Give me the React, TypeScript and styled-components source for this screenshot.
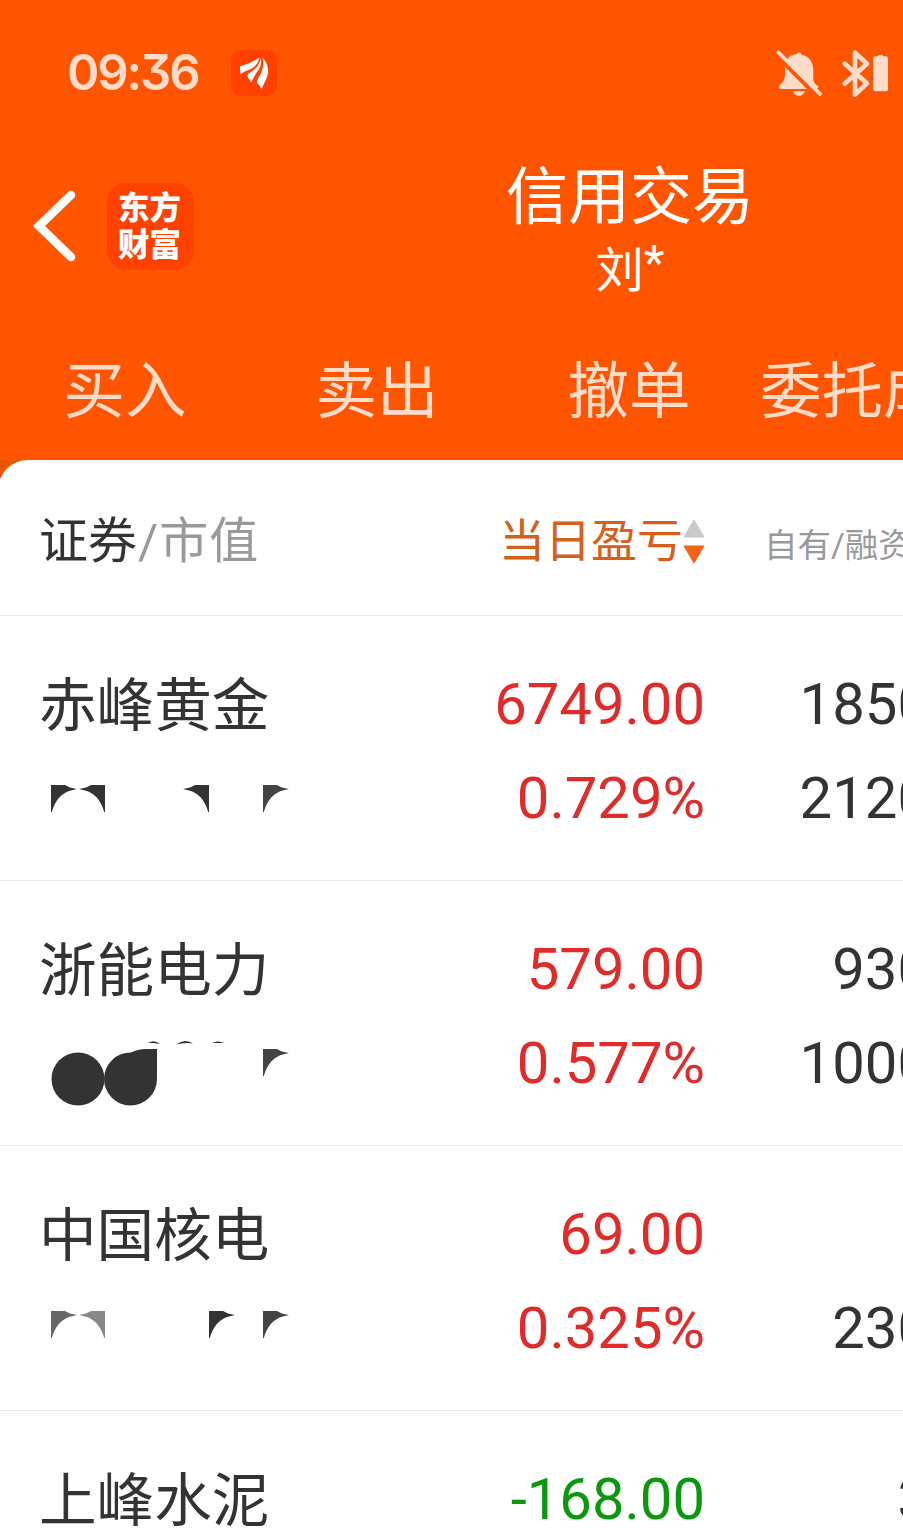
import React from 'react';
import styled, { createGlobalStyle } from 'styled-components';

const GlobalStyle = createGlobalStyle`
  * { box-sizing: border-box; }
  body {
    margin: 0;
    overflow: hidden;
    background: #fff;
    font-family: Roboto, 'Noto Sans CJK SC', sans-serif;
  }
`;

const Screen = styled.div`
  width: 903px;
  height: 1533px;
  overflow: hidden;
  background: #fff;
  color: #333;
`;

const Header = styled.header`
  height: 460px;
  background: #ff5500;
  color: #fff;
`;

const StatusBar = styled.div`
  display: flex;
  align-items: center;
  height: 146px;
  padding: 0 13px 0 67px;
`;

const Clock = styled.span`
  width: 164px;
  font: 600 49px/60px Inter, sans-serif;
  font-feature-settings: 'cv09';
  letter-spacing: -2.1px;
  color: #ffdcc9;
`;

const StatusIcons = styled.svg`
  margin-left: auto;
`;

const TitleBar = styled.div`
  display: grid;
  grid-template-columns: 107px 87px 1fr;
  height: 171px;
`;

const BackIcon = styled.svg`
  margin: 44px 0 0 30px;
`;

const BrandBadge = styled.div`
  display: flex;
  flex-direction: column;
  width: 87px;
  height: 87px;
  margin-top: 37px;
  padding: 4px 2px 0 0;
  border-radius: 19px;
  background: #ff4200;
  text-align: center;
  font: 900 31.5px/37px 'Noto Sans CJK SC', sans-serif;
`;

const TitleBlock = styled.div`
  width: 872px;
  text-align: center;
`;

const Title = styled.h1`
  margin: 10px 0 0;
  font: 400 62px/72px 'Noto Sans CJK SC', sans-serif;
`;

const Account = styled.div`
  height: 80px;
  padding-top: 6px;
  font: 400 48px/74px Roboto, 'Noto Sans CJK SC', sans-serif;
`;

const Mask = styled.span`
  display: inline-block;
  line-height: 40px;
  vertical-align: 8px;
`;

const Tabs = styled.nav`
  display: grid;
  grid-template-columns: repeat(4, 252px);
  margin-left: -1px;
  height: 140px;
`;

const Tab = styled.span`
  text-align: center;
  white-space: nowrap;
  color: #ffdcc9;
  font: 400 61.5px/140px 'Noto Sans CJK SC', sans-serif;

  &:last-child {
    padding-left: 4px;
  }
`;

const PanelBackdrop = styled.div`
  background: linear-gradient(#ec5500 0 40px, #fff 40px);
`;

const Panel = styled.main`
  margin-left: -2px;
  padding-left: 2px;
  border-radius: 30px 0 0 0;
  background: #fff;
`;

const Row = styled.div`
  display: grid;
  grid-template-columns: 450px 216px 225px;
  width: 930px;
  padding-left: 39px;
  border-bottom: 1px solid #ebebeb;
`;

const HeadRow = styled(Row)`
  height: 156px;
  padding-top: 4px;
  line-height: 156px;
  white-space: nowrap;
`;

const SecurityHead = styled.span`
  font-size: 49px;
`;

const Muted = styled.span`
  color: #999;
  letter-spacing: 1px;
  padding-left: 1px;
`;

const ProfitHead = styled.span`
  display: flex;
  justify-content: flex-end;
  align-items: center;
  height: 153px;
  color: #d5601c;
  font-size: 46px;
`;

const OwnHead = styled.span`
  padding: 4px 0 0 59px;
  color: #999;
  font-size: 33.5px;
`;

const StockRow = styled(Row)`
  height: 265px;
  padding-top: 41px;
`;

const NameCell = styled.div`
  margin-top: -3px;
  font: 400 57.6px/94px 'Noto Sans CJK SC', sans-serif;
`;

const Residue = styled.svg`
  display: block;
  margin-top: 3px;
`;

const NumberCell = styled.div<{ $color?: string }>`
  text-align: right;
  font-size: 58px;
  line-height: 94px;
  color: ${p => p.$color ?? '#333'};
`;

const Line = styled.div`
  height: 94px;
`;

const leftCorner = (x: number, y: number, fill = '#333') => (
  <path d={`M${x} ${y}h14l5 2.500 7 1.500-6 1.500Q${x + 6} ${y + 9} ${x + 0.8} ${y + 27}h-.8z`} fill={fill} />
);
const rightCorner = (x: number, y: number, fill = '#333') => (
  <path d={`M${x} ${y}h-14l-5 2.500-7 1.500 6 1.500Q${x - 6} ${y + 9} ${x - 0.8} ${y + 27}h.8z`} fill={fill} />
);

interface Stock {
  name: string;
  profit: string;
  rate: string;
  own: string;
  total: string;
  color: string;
  residue?: React.ReactNode;
}

const RED = '#e02b2b';
const GREEN = '#0b980f';

const stocks: Stock[] = [
  {
    name: '赤峰黄金', profit: '6749.00', rate: '0.729%', own: '1850', total: '2120', color: RED,
    residue: <>{leftCorner(12, 34)}{rightCorner(66, 34)}{rightCorner(170, 34)}{leftCorner(224, 34, '#444')}</>,
  },
  {
    name: '浙能电力', profit: '579.00', rate: '0.577%', own: '930', total: '1000', color: RED,
    residue: (
      <>
        <circle cx="39" cy="63" r="26.5" fill="#333" />
        <path d="M118 33v30a26.5 26.5 0 1 1-26-26.5q7-3.500 15-3.500z" fill="#333" />
        <path d="M109 27q6-4 12 1-6-1.500-12-1zM137 28.500q9-6.500 17-1-8-1.500-17 1zM173 27q6-3 12 0z" fill="#333" />
        {leftCorner(224, 33, '#444')}
      </>
    ),
  },
  {
    name: '中国核电', profit: '69.00', rate: '0.325%', own: '', total: '230', color: RED,
    residue: <>{leftCorner(12, 30, '#666')}{rightCorner(66, 30, '#888')}{leftCorner(170, 30)}{leftCorner(224, 30, '#444')}</>,
  },
  { name: '上峰水泥', profit: '-168.00', rate: '', own: '3', total: '', color: GREEN },
];

export default function App() {
  return (
    <Screen>
      <GlobalStyle />
      <Header>
        <StatusBar>
          <Clock>09:36</Clock>
          <svg width="46" height="46" viewBox="693 60 138 138">
            <rect x="693" y="60" width="138" height="138" rx="30" fill="#ff4000" />
            <g fill="#fff">
              <path d="M720 109q8-3 23-8 20-8 35-18-4 20-20 31-10 6-22 10-9 4-14 9-3-12-2-24z" />
              <path d="M781 83q6 17-4 34-7 10-13 20-4 8-11 21-4-11-9-15-2-7 1-14 30-18 36-46z" />
              <path d="M788 83q15 15 16 36 2 16-7 32-7 14-12 25-6-11-14-16-1-8 3-14 21-32 14-63z" />
            </g>
            <path d="M780 82q1 18-14 31-9 9-22 17M785 82q7 25-9 46-8 11-14 24" fill="none" stroke="#ff4000" strokeWidth="3.500" />
          </svg>
          <StatusIcons width="115" height="49" viewBox="75 54 345 147" fill="#ffdcc9">
            <path d="M116 78q10-7 25-9v-3q6-5 12 0v4q35 8 37 43v34q3 13 16 20l-6 8L112 90zM105 108l66 66H89q-5-5 0-11 15-12 16-30zM129 181h35q-3 13-17 14-14-1-18-14z" />
            <path d="M85 64l125 125" stroke="#ffdcc9" strokeWidth="11" strokeLinecap="round" />
            <path d="M284 98l67 59-36 34V65l36 33-67 60" fill="none" stroke="#ffdcc9" strokeWidth="14" strokeLinecap="round" strokeLinejoin="round" />
            <path d="M376 76h8v-4h15v4h8q7 0 7 7v91q0 7-7 7h-31q-7 0-7-7V83q0-7 7-7z" />
          </StatusIcons>
        </StatusBar>
        <TitleBar>
          <BackIcon width="46" height="72" viewBox="0 0 46 72">
            <path d="M41 5L9 36l32 31" fill="none" stroke="#fff" strokeWidth="8.500" strokeLinecap="round" />
          </BackIcon>
          <BrandBadge><span>东方</span><span>财富</span></BrandBadge>
          <TitleBlock>
            <Title>信用交易</Title>
            <Account>刘<Mask>*</Mask></Account>
          </TitleBlock>
        </TitleBar>
        <Tabs>
          {['买入', '卖出', '撤单', '委托成交'].map(t => <Tab key={t}>{t}</Tab>)}
        </Tabs>
      </Header>
      <PanelBackdrop>
        <Panel>
          <HeadRow>
            <SecurityHead>证券<Muted>/市值</Muted></SecurityHead>
            <ProfitHead>
              当日盈亏
              <svg width="22" height="46" viewBox="0 0 22 46">
                <path d="M11 2L21 19H1z" fill="#c9c9c9" stroke="#c9c9c9" strokeLinejoin="round" />
                <path d="M11 45L21 28H1z" fill="#f46216" stroke="#f46216" strokeLinejoin="round" />
              </svg>
            </ProfitHead>
            <OwnHead>自有/融资</OwnHead>
          </HeadRow>
          {stocks.map(s => (
            <StockRow key={s.name}>
              <NameCell>
                {s.name}
                {s.residue && <Residue width="260" height="94" viewBox="0 0 260 94">{s.residue}</Residue>}
              </NameCell>
              <NumberCell $color={s.color}>
                <Line>{s.profit}</Line>
                <Line>{s.rate}</Line>
              </NumberCell>
              <NumberCell>
                <Line>{s.own}</Line>
                <Line>{s.total}</Line>
              </NumberCell>
            </StockRow>
          ))}
        </Panel>
      </PanelBackdrop>
    </Screen>
  );
}
